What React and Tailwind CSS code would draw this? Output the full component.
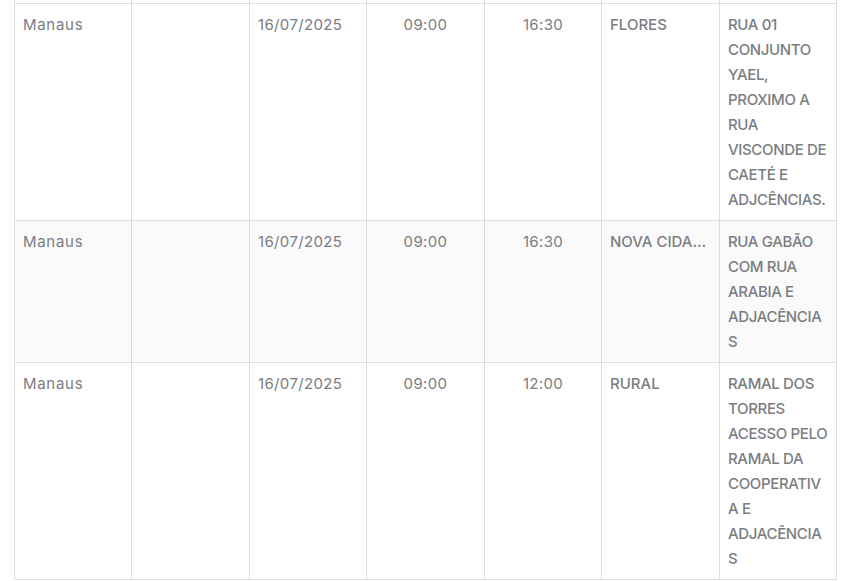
import React from 'react';

const rows = [
  {
    city: 'Manaus',
    date: '16/07/2025',
    start: '09:00',
    end: '16:30',
    area: 'FLORES',
    address: ['RUA 01', 'CONJUNTO', 'YAEL,', 'PROXIMO A', 'RUA', 'VISCONDE DE', 'CAETÉ E', 'ADJCÊNCIAS.'],
  },
  {
    city: 'Manaus',
    date: '16/07/2025',
    start: '09:00',
    end: '16:30',
    area: 'NOVA CIDADE',
    address: ['RUA GABÃO', 'COM RUA', 'ARABIA E', 'ADJACÊNCIA', 'S'],
  },
  {
    city: 'Manaus',
    date: '16/07/2025',
    start: '09:00',
    end: '12:00',
    area: 'RURAL',
    address: ['RAMAL DOS', 'TORRES', 'ACESSO PELO', 'RAMAL DA', 'COOPERATIV', 'A E', 'ADJACÊNCIA', 'S'],
  },
];

const cell = 'border border-[#dddddd] px-2 py-2 align-top';

const App = () => {
  return (
    <div className="w-[853px] h-[581px] bg-white overflow-hidden pl-[14px] font-['Inter',sans-serif] text-[15px] leading-[25px] text-[#7b7d82]">
      <table className="table-fixed border-collapse w-[823px]">
        <colgroup>
          <col className="w-[117px]" />
          <col className="w-[118px]" />
          <col className="w-[117px]" />
          <col className="w-[118px]" />
          <col className="w-[117px]" />
          <col className="w-[118px]" />
          <col className="w-[117px]" />
        </colgroup>
        <tbody>
          {/* tail of the previous row, scrolled off */}
          <tr className="h-[3px]">
            {Array.from({ length: 7 }).map((_, i) => (
              <td key={i} className="border-x border-b border-[#dddddd] p-0 leading-none h-[3px]"></td>
            ))}
          </tr>
          {rows.map((row, index) => (
            <tr key={index} className={index % 2 === 1 ? 'bg-[#fafafa]' : 'bg-white'}>
              <td className={`${cell} tracking-[0.7px]`}>{row.city}</td>
              <td className={cell}></td>
              <td className={`${cell} tracking-[0.35px]`}>{row.date}</td>
              <td className={`${cell} text-center tracking-[0.35px]`}>{row.start}</td>
              <td className={`${cell} text-center tracking-[0.35px]`}>{row.end}</td>
              <td className={`${cell} font-medium`}>
                <div className="truncate">{row.area}</div>
              </td>
              <td className={`${cell} font-medium tracking-[-0.35px]`}>
                {row.address.map((line, i) => (
                  <div key={i} className="whitespace-nowrap">{line}</div>
                ))}
              </td>
            </tr>
          ))}
        </tbody>
      </table>
    </div>
  );
};

export default App;
